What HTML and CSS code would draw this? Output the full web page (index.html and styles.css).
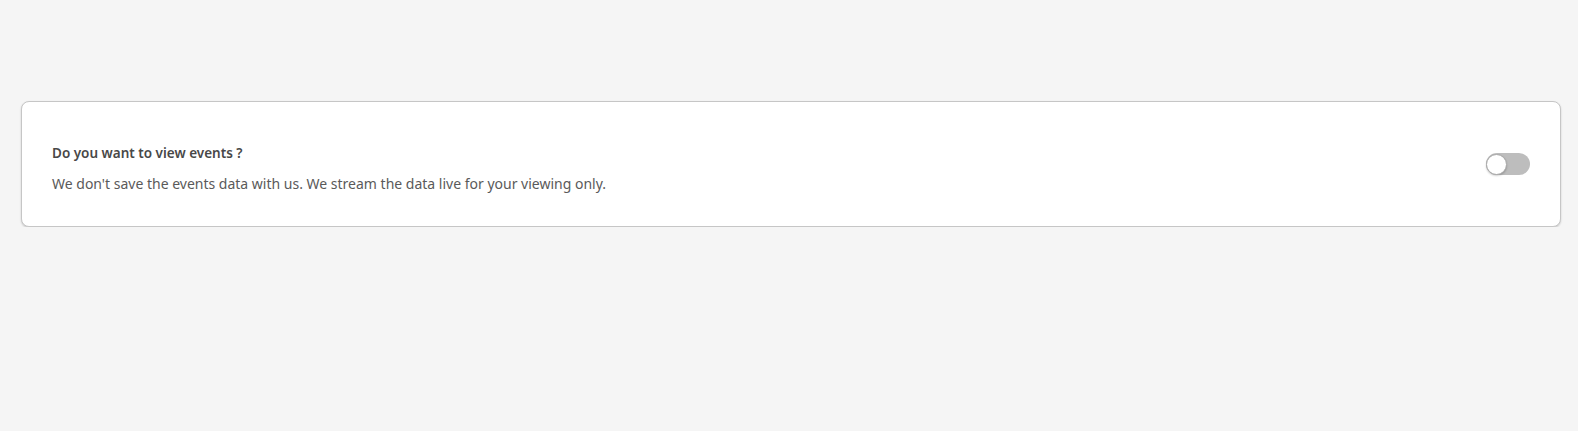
FILE: index.html
```html
<!DOCTYPE html>
<html>
<head>
<meta charset="utf-8">
<link rel="stylesheet" href="styles.css">
</head>
<body>
<div class="page">
  <div class="card">
    <div class="text">
      <div class="title">Do you want to view events ?</div>
      <div class="desc">We don't save the events data with us. We stream the data live for your viewing only.</div>
    </div>
    <div class="toggle"><span class="knob"></span></div>
  </div>
</div>
</body>
</html>
```
FILE: styles.css
```css
html, body {
  margin: 0;
  padding: 0;
  background: #f5f5f5;
  font-family: "Noto Sans", "Open Sans", sans-serif;
}
.page {
  padding: 101px 17px 0 21px;
}
.card {
  box-sizing: border-box;
  height: 126px;
  background: #fff;
  border: 1px solid #c6c6c6;
  border-radius: 8px;
  box-shadow: 0 1px 2px rgba(0,0,0,0.18);
  display: flex;
  align-items: center;
  justify-content: space-between;
  padding: 0 30px;
}
.text {
  padding-top: 8px;
}
.title {
  font-size: 13.5px;
  line-height: 18px;
  font-weight: 600;
  color: #484848;
}
.desc {
  margin-top: 13px;
  font-size: 14px;
  line-height: 18px;
  color: #5a5a5a;
}
.toggle {
  width: 44px;
  height: 22px;
  border-radius: 11px;
  background: #bdbdbd;
  display: flex;
  align-items: center;
}
.knob {
  box-sizing: border-box;
  width: 21px;
  height: 21px;
  border-radius: 50%;
  background: #fff;
  border: 1px solid #a9a9a9;
  box-shadow: 0 1px 2px rgba(0,0,0,0.2);
}
```
